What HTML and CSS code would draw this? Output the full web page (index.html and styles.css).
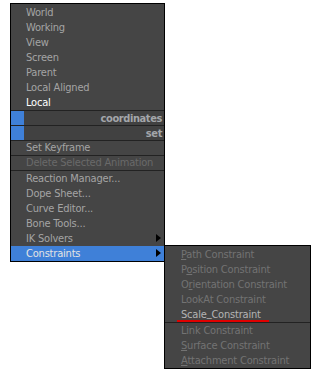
FILE: index.html
```html
<!doctype html>
<html>
  <head>
    <title>Context Menu</title>
    <link rel="stylesheet" href="styles.css">
  </head>
  <body>
    <div class="screen">
      <div class="menu main">
        <ul class="list">
          <li class="item">World</li>
          <li class="item">Working</li>
          <li class="item">View</li>
          <li class="item">Screen</li>
          <li class="item">Parent</li>
          <li class="item">Local Aligned</li>
          <li class="item current">Local</li>
        </ul>
        <div class="bar"><span class="swatch"></span><span class="bar-label">coordinates</span></div>
        <div class="bar"><span class="swatch"></span><span class="bar-label">set</span></div>
        <div class="item boxed">Set Keyframe</div>
        <div class="item boxed disabled">Delete Selected Animation</div>
        <ul class="list">
          <li class="item">Reaction Manager...</li>
          <li class="item">Dope Sheet...</li>
          <li class="item">Curve Editor...</li>
          <li class="item">Bone Tools...</li>
          <li class="item has-sub">IK Solvers<span class="arrow"></span></li>
          <li class="item has-sub open">Constraints<span class="arrow"></span></li>
        </ul>
      </div>
      <div class="menu sub">
        <ul class="list">
          <li class="item"><u>P</u>ath Constraint</li>
          <li class="item">P<u>o</u>sition Constraint</li>
          <li class="item">O<u>r</u>ientation Constraint</li>
          <li class="item">LookAt Constraint</li>
          <li class="item lit">Scale<span class="lift">_</span>Constraint<span class="mark"></span></li>
        </ul>
        <ul class="list split">
          <li class="item">Link Constraint</li>
          <li class="item"><u>S</u>urface Constraint</li>
          <li class="item"><u>A</u>ttachment Constraint</li>
        </ul>
      </div>
    </div>
  </body>
</html>
```

FILE: styles.css
```css
body {
  margin: 0;
  background: #fff;
  font-family: "DejaVu Sans Condensed", "DejaVu Sans", sans-serif;
  font-size: 11px;
  letter-spacing: -0.2px;
}

ul {
  list-style-type: none;
  margin: 0;
  padding: 0;
}

.screen {
  display: flex;
  align-items: flex-start;
  padding: 3px 0 0 10px;
}

.menu {
  background: #454545;
  border: 1px solid #000;
}

.main {
  width: 153px;
  padding-top: 1px;
}

.item {
  position: relative;
  height: 15px;
  line-height: 15px;
  padding-left: 15px;
  color: #a4a4a4;
  white-space: nowrap;
}

.item.current {
  color: #fff;
}

.item.disabled {
  color: #6a6a6a;
}

.boxed {
  height: 14px;
  line-height: 14px;
  border-top: 1px solid #222;
}

.boxed + .list {
  border-top: 1px solid #222;
}

.bar {
  display: flex;
  align-items: center;
  height: 14px;
  border-top: 1px solid #222;
  background: #414141;
}

.swatch {
  width: 13px;
  height: 14px;
  background: #3f80d8;
}

.bar-label {
  flex: 1;
  text-align: right;
  padding-right: 2px;
  font-weight: bold;
  letter-spacing: -0.4px;
  color: #a3a6aa;
}

.arrow {
  position: absolute;
  right: 3px;
  top: 3px;
  border-top: 4.5px solid transparent;
  border-bottom: 4.5px solid transparent;
  border-left: 5px solid #000;
}

.item.open {
  background: #3f80d8;
  color: #e4e4e4;
}

/* popout submenu, opens level with the Constraints row */
.sub {
  width: 145px;
  margin: 242px 0 0 -1px;
  padding-top: 1px;
}

.sub .item {
  padding-left: 16px;
  color: #737373;
}

.sub .item.lit {
  color: #b4b4b4;
}

.sub u {
  text-decoration-thickness: 1px;
  text-underline-offset: 1px;
}

.lift {
  position: relative;
  top: -2px;
}

.mark {
  position: absolute;
  left: 12px;
  width: 92px;
  bottom: 0;
  height: 2px;
  background: #e00000;
}

.split {
  border-top: 1px solid #222;
}
```
